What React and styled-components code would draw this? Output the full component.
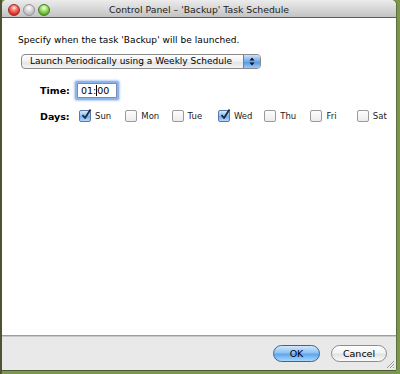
import React from "react";
import styled, { createGlobalStyle } from "styled-components";

const GlobalStyle = createGlobalStyle`
  html, body { margin: 0; padding: 0; }
  body {
    width: 400px;
    height: 374px;
    overflow: hidden;
    background: #7a984c;
    font-family: "DejaVu Sans", "Liberation Sans", sans-serif;
  }
`;

const Desktop = styled.div`
  width: 400px;
  height: 374px;
  box-sizing: border-box;
  padding: 0 4px 4px 2px;
  background: linear-gradient(to right, #4b5631 0 2px, #7a984c 2px);
`;

const Window = styled.div`
  display: flex;
  flex-direction: column;
  height: 100%;
  border-radius: 5px 5px 0 0;
  overflow: hidden;
  background: #fff;
  box-shadow: 0 1px 0 #4d5a35, 1px 0 0 #5f6f40;
`;

const TitleBar = styled.div`
  display: grid;
  grid-template-columns: 1fr auto 1fr;
  align-items: center;
  height: 17px;
  background: linear-gradient(#ececec, #c3c3c3);
  border-bottom: 1px solid #5c5c5c;
`;

const Lights = styled.div`
  display: flex;
  gap: 3px;
  padding-left: 6px;
  padding-top: 2px;
`;

const Light = styled.span`
  width: 12px;
  height: 12px;
  border-radius: 50%;
  box-sizing: border-box;
  border: 1px solid ${p => p.$edge};
  background: radial-gradient(circle at 50% 30%, #fff 0, ${p => p.$hi} 25%, ${p => p.$c} 75%);
`;

const Title = styled.div`
  font-size: 9.3px;
  color: #222;
  white-space: nowrap;
  padding-top: 1px;
`;

const Content = styled.div`
  flex: 1;
  padding: 16px 16px 0;
  font-size: 9px;
  color: #000;
`;

const Intro = styled.div`
  line-height: 12px;
  letter-spacing: 0.05px;
`;

const Select = styled.div`
  display: flex;
  align-items: center;
  width: 240px;
  height: 15px;
  margin: 8px 0 0 3px;
  box-sizing: border-box;
  border: 1px solid #8a8a8a;
  border-radius: 4px;
  background: linear-gradient(#ffffff, #f0f0f0 50%, #e2e2e2 51%, #f4f4f4);
  overflow: hidden;
`;

const SelectText = styled.span`
  flex: 1;
  padding-left: 8px;
  line-height: 13px;
  white-space: nowrap;
`;

const Stepper = styled.span`
  display: flex;
  align-items: center;
  justify-content: center;
  width: 16px;
  height: 100%;
  border-left: 1px solid #5b7fb8;
  background: linear-gradient(#cde3fb, #6fa8ea 50%, #4f93e3 51%, #9bcaf7);
`;

const Form = styled.div`
  display: grid;
  grid-template-columns: 37px auto;
  row-gap: 12px;
  align-items: center;
  margin: 14px 0 0 22px;
`;

const Label = styled.span`
  font-weight: bold;
  font-size: 9.5px;
`;

const TimeInput = styled.div`
  width: 40px;
  height: 15px;
  box-sizing: border-box;
  border: 1px solid #7a8ea8;
  box-shadow: 0 0 0 2px #8db4ea, 0 0 2px 3px #b6cff2;
  border-radius: 1px;
  padding-left: 3px;
  font-size: 9.5px;
  line-height: 13px;
  background: #fff;
`;

const Caret = styled.span`
  display: inline-block;
  width: 1px;
  height: 11px;
  background: #000;
  vertical-align: -2px;
`;

const Days = styled.div`
  display: flex;
  margin-left: 2px;
`;

const Day = styled.label`
  display: flex;
  align-items: center;
  gap: 4px;
  width: 46.3px;
  font-size: 8.5px;
  color: #222;
`;

const Box = styled.span`
  position: relative;
  width: 12px;
  height: 12px;
  box-sizing: border-box;
  border-radius: 2px;
  border: 1px solid ${p => (p.$checked ? "#5a78a8" : "#9a9a9a")};
  background: ${p =>
    p.$checked
      ? "linear-gradient(#d4e8fb, #8fbdf0 50%, #70aaee 51%, #b5d8fa)"
      : "linear-gradient(#fdfdfd, #ececec)"};
`;

const Footer = styled.div`
  position: relative;
  display: flex;
  justify-content: flex-end;
  align-items: center;
  gap: 11px;
  height: 34px;
  padding-right: 9px;
  background: #e9e9e9;
  border-top: 1px solid #9f9f9f;
  box-shadow: inset 0 1px 0 #c9c9c9;
`;

const Button = styled.button`
  height: 17px;
  min-width: ${p => p.$w}px;
  padding: 0 10px;
  border-radius: 9px;
  font-family: "DejaVu Sans", sans-serif;
  font-size: 9.5px;
  color: #000;
  border: 1px solid ${p => (p.$primary ? "#3e629b" : "#8c8c8c")};
  background: ${p =>
    p.$primary
      ? "linear-gradient(#d2e8fc, #8cc2f3 45%, #5ea6ec 55%, #a9d8fb)"
      : "linear-gradient(#ffffff, #f3f3f3 45%, #e3e3e3 55%, #fafafa)"};
`;

const Grip = styled.svg`
  position: absolute;
  right: 1px;
  bottom: 1px;
`;

const days = [
  ["Sun", true],
  ["Mon", false],
  ["Tue", false],
  ["Wed", true],
  ["Thu", false],
  ["Fri", false],
  ["Sat", false],
];

function Check() {
  return (
    <svg width="11" height="11" viewBox="0 0 11 11" style={{ position: "absolute", left: 1, top: -2 }}>
      <path d="M1.5 6 L4 9 L9.5 0.5" fill="none" stroke="#1a2a40" strokeWidth="1.8" strokeLinejoin="round" />
    </svg>
  );
}

export default function App() {
  return (
    <>
      <GlobalStyle />
      <Desktop>
        <Window>
          <TitleBar>
            <Lights>
              <Light $c="#d3271f" $hi="#ff8a7d" $edge="#9b2a22" />
              <Light $c="#b9b9b9" $hi="#e6e6e6" $edge="#949494" />
              <Light $c="#5aa92a" $hi="#b8ef86" $edge="#3f7e22" />
            </Lights>
            <Title>Control Panel – 'Backup' Task Schedule</Title>
            <span />
          </TitleBar>
          <Content>
            <Intro>Specify when the task 'Backup' will be launched.</Intro>
            <Select>
              <SelectText>Launch Periodically using a Weekly Schedule</SelectText>
              <Stepper>
                <svg width="6" height="9" viewBox="0 0 6 9">
                  <path d="M3 0.5 L5.5 3.5 L0.5 3.5 Z M3 8.5 L5.5 5.5 L0.5 5.5 Z" fill="#111" />
                </svg>
              </Stepper>
            </Select>
            <Form>
              <Label>Time:</Label>
              <TimeInput>01:<Caret />00</TimeInput>
              <Label>Days:</Label>
              <Days>
                {days.map(([d, c]) => (
                  <Day key={d}>
                    <Box $checked={c}>{c && <Check />}</Box>
                    {d}
                  </Day>
                ))}
              </Days>
            </Form>
          </Content>
          <Footer>
            <Button $primary $w={47}>OK</Button>
            <Button $w={56}>Cancel</Button>
            <Grip width="9" height="9" viewBox="0 0 9 9">
              <path d="M8 1 L1 8 M8 4 L4 8 M8 7 L7 8" stroke="#9a9a9a" strokeWidth="1" />
            </Grip>
          </Footer>
        </Window>
      </Desktop>
    </>
  );
}
